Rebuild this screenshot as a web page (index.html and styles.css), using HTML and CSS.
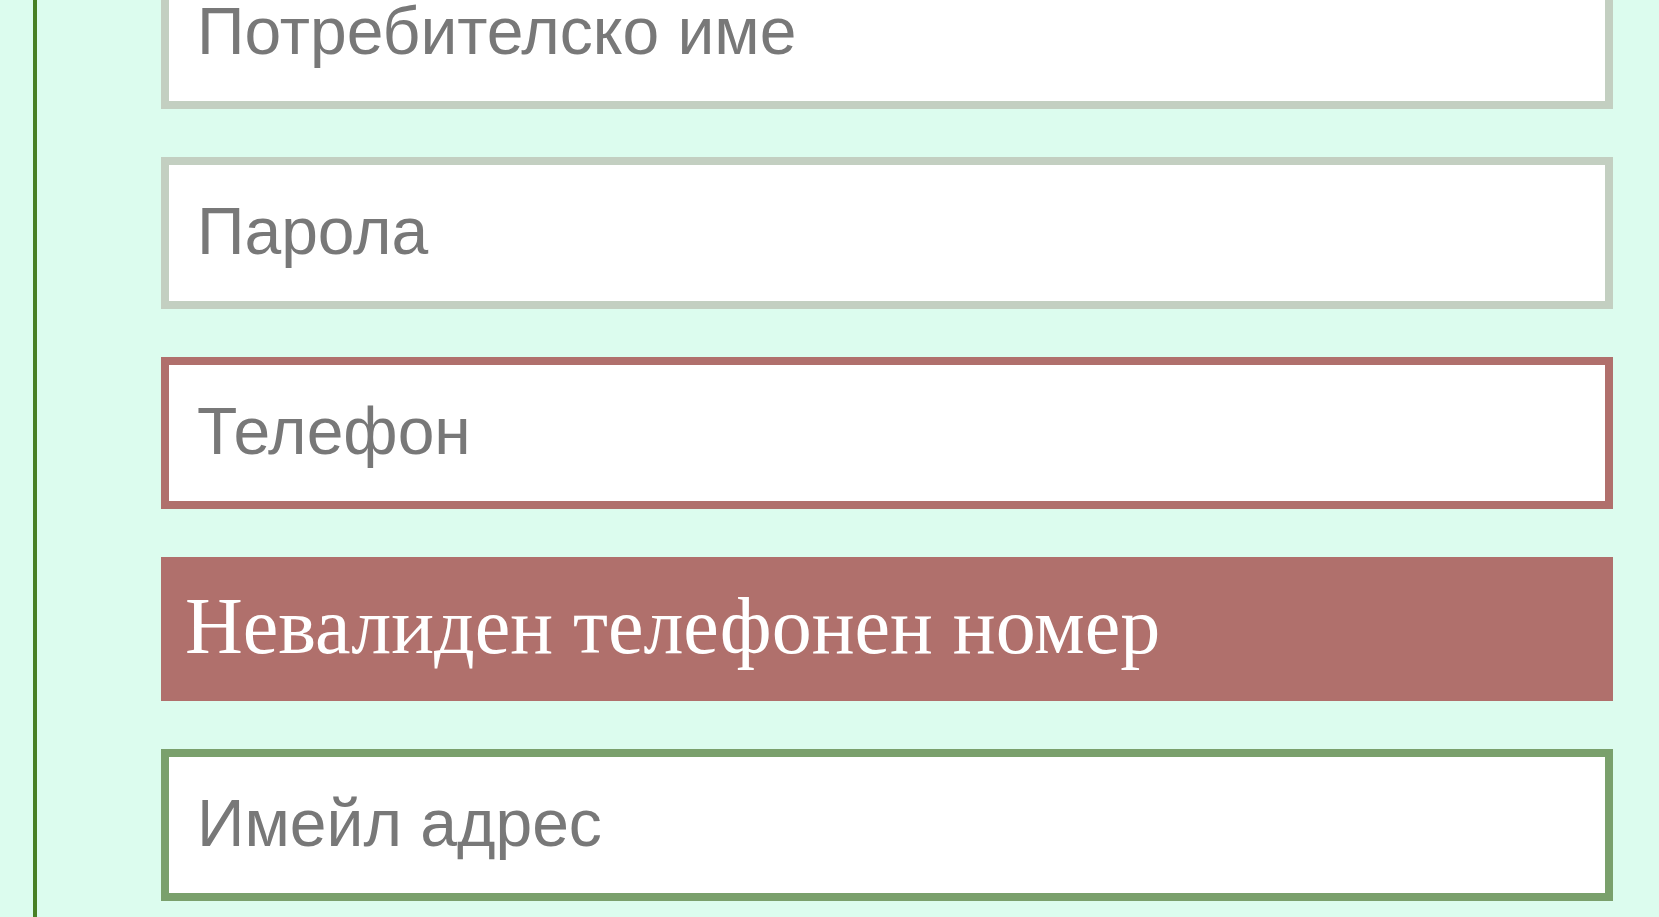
FILE: index.html
```html
<!DOCTYPE html>
<html lang="bg">
<head>
<meta charset="utf-8">
<title>Регистрация</title>
<link rel="stylesheet" href="styles.css">
</head>
<body>
<main class="panel">
  <form class="form">
    <input class="field" type="text" placeholder="Потребителско име">
    <input class="field" type="password" placeholder="Парола">
    <input class="field field--invalid" type="tel" placeholder="Телефон">
    <div class="error">Невалиден телефонен номер</div>
    <input class="field field--valid" type="email" placeholder="Имейл адрес">
  </form>
</main>
</body>
</html>
```

FILE: styles.css
```css
html, body {
  margin: 0;
  padding: 0;
  background: #dcfcee;
  overflow: hidden;
}

.panel {
  margin-left: 33px;
  border-left: 4px solid #488024;
  padding: 0 46px 40px 124px;
  min-height: 100vh;
}

.form {
  display: flex;
  flex-direction: column;
  gap: 48px;
  margin-top: -43px;
}

.field {
  display: block;
  box-sizing: border-box;
  width: 100%;
  height: 152px;
  margin: 0;
  border: 8px solid #c3cfc1;
  border-radius: 0;
  background: #fff;
  padding: 0 24px 4px 28px;
  font-family: "Liberation Sans", Arial, sans-serif;
  font-size: 66px;
  color: #333;
  outline: none;
}

.field::placeholder {
  color: #787878;
  opacity: 1;
}

.field--invalid {
  border-color: #b0706c;
}

.field--valid {
  border-color: #7aa06c;
}

.error {
  box-sizing: border-box;
  height: 144px;
  padding: 24px 24px 0 24px;
  background: #b0706c;
  color: #fff;
  font-family: "Liberation Serif", "Times New Roman", serif;
  font-size: 80px;
}
```
